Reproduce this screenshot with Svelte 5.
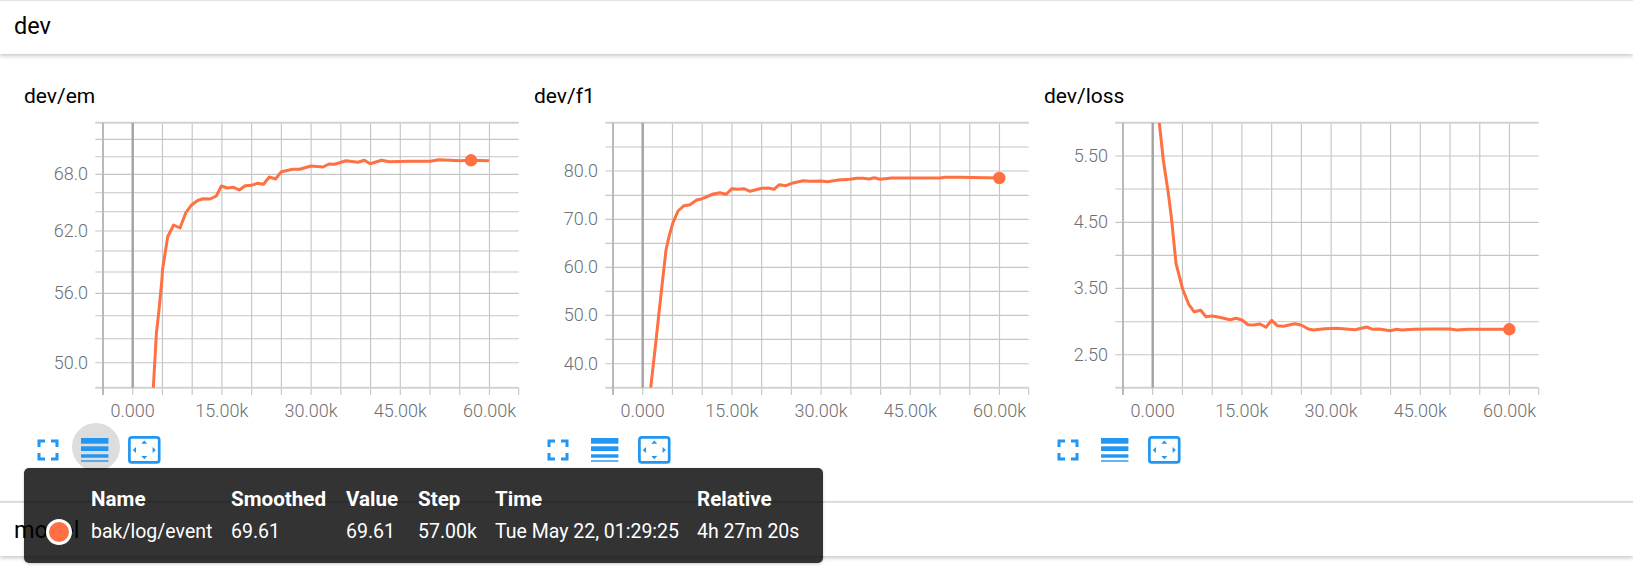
<script>
  // crop coords from the chart measurements -> local svg coords
  const crop = (list) => list.map(([x, y]) => [x / 3 + 10, y / 3 + 80 - SVG_TOP])

  const SVG_TOP = 115
  const PLOT_LEFT = 95.3
  const PLOT_RIGHT = 518.7
  const PLOT_TOP = 7.7
  const PLOT_BOTTOM = 272.7
  const ZERO_X = 132.7
  const STEP_X = 29.73

  const vlines = Array.from({ length: 14 }, (_, i) => 103 + STEP_X * i)
  const xlabels = ['0.000', '15.00k', '30.00k', '45.00k', '60.00k']

  const charts = [
    {
      title: 'dev/em',
      ylines: [139.3, 156.7, 174.3, 192.7, 211.7, 231, 251, 272, 293.3, 315.7, 338.7, 362.7],
      ylabels: [['68.0', 174.3], ['62.0', 231], ['56.0', 293.3], ['50.0', 362.7]],
      marker: [471, 45.3],
      points: [[153.3, 388], [156.4, 333.3], [159, 310], [161.9, 280], [162.5, 270], [167.7, 236.7], [173.6, 225], [180, 228], [186, 212.3], [191.8, 204.7], [198, 200.3], [203.2, 198.7], [210, 199], [216.3, 196], [221.4, 186], [227.3, 188], [233.5, 187.3], [239.4, 190], [245.2, 185.7], [251.4, 185.3], [257.3, 183.3], [263.5, 184.3], [269.3, 177], [275.5, 179], [281.4, 171.7], [292.7, 169.3], [299.6, 169.3], [311, 166], [323, 167], [328.9, 164], [334.7, 164.3], [346, 160.7], [358, 162.3], [364.4, 160.3], [370.2, 163.7], [381.6, 160.3], [389.2, 161.7], [409.8, 161.3], [430.5, 161.3], [439, 159.7], [459.8, 160.7], [471, 160.3], [489, 160.7]].map(([x, y]) => [x, y - SVG_TOP])
    },
    {
      title: 'dev/f1',
      ylines: [147, 171, 195.3, 219.3, 243.3, 267.3, 291.3, 315.3, 339.3, 363.7],
      ylabels: [['80.0', 171], ['70.0', 219.3], ['60.0', 267.3], ['50.0', 315.3], ['40.0', 363.7]],
      marker: [489.3, 63],
      points: crop([[392, 923], [407, 790], [418, 690], [429, 590], [438, 510], [447, 470], [458, 430], [474, 393], [492, 377], [510, 374], [530, 360], [547, 356], [580, 342], [600, 338], [618, 343], [636, 326], [654, 328], [672, 326], [690, 334], [725, 325], [745, 324], [762, 328], [778, 314], [798, 317], [815, 310], [850, 302], [870, 304], [903, 303], [922, 305], [955, 300], [990, 298], [1010, 295], [1030, 295], [1047, 297], [1063, 293], [1081, 298], [1115, 294], [1170, 294], [1260, 294], [1275, 292], [1320, 292], [1438, 294]])
    },
    {
      title: 'dev/loss',
      ylines: [156, 189, 222.3, 255.3, 288.3, 321.7, 354.7],
      ylabels: [['5.50', 156], ['4.50', 222.3], ['3.50', 288.3], ['2.50', 354.7]],
      marker: [489.3, 214.3],
      points: crop([[388, 128], [400, 240], [415, 340], [424, 410], [438, 550], [458, 628], [476, 673], [492, 695], [512, 691], [528, 710], [546, 708], [565, 711], [600, 719], [618, 715], [636, 720], [654, 734], [672, 735], [690, 732], [708, 742], [725, 721], [742, 737], [760, 739], [795, 731], [815, 736], [835, 747], [850, 750], [885, 746], [920, 745], [975, 749], [1010, 741], [1028, 748], [1047, 747], [1081, 752], [1100, 748], [1115, 750], [1150, 748], [1205, 747], [1260, 747], [1280, 750], [1315, 748], [1438, 748]])
    }
  ]

  const toPath = (pts) => pts.map(([x, y], i) => (i ? 'L' : 'M') + x.toFixed(1) + ' ' + y.toFixed(1)).join(' ')
</script>

<div class="page">
  <section class="pane">dev</section>

  <div class="charts">
    {#each charts as chart, n}
      <div class="card">
        <div class="title">{chart.title}</div>
        <svg class="plot" width="510" height="308" viewBox="0 0 510 308">
          <defs>
            <clipPath id="clip{n}">
              <rect x={PLOT_LEFT} y={PLOT_TOP} width={PLOT_RIGHT - PLOT_LEFT} height={PLOT_BOTTOM - PLOT_TOP} />
            </clipPath>
          </defs>

          {#each chart.ylines as y}
            <line class="grid" x1={PLOT_LEFT} x2={PLOT_RIGHT} y1={y - SVG_TOP} y2={y - SVG_TOP} />
          {/each}
          {#each vlines as x}
            <line class="grid" x1={x} x2={x} y1={PLOT_TOP} y2={PLOT_BOTTOM + 7.3} />
          {/each}
          <line class="grid" x1={PLOT_RIGHT} x2={PLOT_RIGHT} y1={PLOT_BOTTOM} y2={PLOT_BOTTOM + 7.3} />

          <line class="edge" x1={PLOT_LEFT} x2={PLOT_RIGHT} y1={PLOT_TOP} y2={PLOT_TOP} />
          <line class="edge" x1={PLOT_LEFT} x2={PLOT_RIGHT} y1={PLOT_BOTTOM} y2={PLOT_BOTTOM} />
          <line class="left" x1="103" x2="103" y1={PLOT_TOP} y2={PLOT_BOTTOM + 7.3} />
          <line class="zero" x1={ZERO_X} x2={ZERO_X} y1={PLOT_TOP} y2={PLOT_BOTTOM} />

          {#each chart.ylabels as [label, y]}
            <text class="tick" x="88" y={y - SVG_TOP + 5.8} text-anchor="end">{label}</text>
          {/each}
          {#each xlabels as label, i}
            <text class="tick" x={ZERO_X + STEP_X * 3 * i} y="301.5" text-anchor="middle">{label}</text>
          {/each}

          <path class="series" d={toPath(chart.points)} clip-path="url(#clip{n})" />
          <circle class="dot" cx={chart.marker[0]} cy={chart.marker[1]} r="6.2" />
        </svg>

        <div class="tools">
          <button class="tool" aria-label="fullscreen">
            <svg width="36" height="36" viewBox="0 0 24 24"><path d="M7 14H5v5h5v-2H7v-3zm-2-4h2V7h3V5H5v5zm12 7h-3v2h5v-5h-2v3zM14 5v2h3v3h2V5h-5z" /></svg>
          </button>
          <button class="tool" class:active={n === 0} aria-label="log scale">
            <svg class="bars" width="28" height="24" viewBox="0 0 28 24">
              <rect x="0" y="0" width="27.4" height="5.7" />
              <rect x="0" y="8.3" width="27.4" height="4.7" />
              <rect x="0" y="16.3" width="27.4" height="3.4" />
              <rect x="0" y="22.3" width="27.4" height="1.4" />
            </svg>
          </button>
          <button class="tool" aria-label="fit domain">
            <svg width="33" height="28" viewBox="0 0 33 28">
              <rect class="frame" x="1.4" y="1.4" width="29.8" height="25" rx="2.5" />
              <path d="M16.3 4.6l3 3.2h-6zM16.3 23.2l3-3.2h-6zM4.8 14l3.2-3v6zM27.8 14l-3.2-3v6z" />
            </svg>
          </button>
        </div>
      </div>
    {/each}
  </div>

  <section class="pane model">model</section>

  <div class="tooltip">
    <span class="swatch"></span>
    <table>
      <colgroup>
        <col class="c-name" /><col class="c-smoothed" /><col class="c-value" /><col class="c-step" /><col class="c-time" /><col class="c-rel" />
      </colgroup>
      <thead>
        <tr><th>Name</th><th>Smoothed</th><th>Value</th><th>Step</th><th>Time</th><th>Relative</th></tr>
      </thead>
      <tbody>
        <tr><td>bak/log/event</td><td>69.61</td><td>69.61</td><td>57.00k</td><td>Tue May 22, 01:29:25</td><td>4h 27m 20s</td></tr>
      </tbody>
    </table>
  </div>
</div>

<style>
  :global(body) {
    margin: 0;
    background: #fff;
  }

  .page {
    position: relative;
    width: 1633px;
    height: 572px;
    overflow: hidden;
    font-family: Roboto, "Liberation Sans", sans-serif;
    color: #000;
  }

  .pane {
    box-sizing: border-box;
    height: 54px;
    padding: 0 14px;
    border-top: 1px solid #e4e4e4;
    background: #fff;
    font-size: 23.5px;
    line-height: 50px;
    box-shadow: 0 2px 4px rgba(0, 0, 0, 0.22);
  }

  .model {
    border-top: 2px solid #ddd;
    margin-top: 30px;
    height: 55px;
    line-height: 54px;
  }

  .charts {
    display: flex;
  }

  .card {
    width: 510px;
    padding-top: 30px;
  }

  .title {
    padding-left: 24px;
    height: 24px;
    margin-bottom: 7px;
    font-size: 21px;
    line-height: 24px;
  }

  .plot {
    display: block;
    overflow: visible;
  }

  .grid {
    stroke: #c6c6c6;
    stroke-width: 1.15;
  }

  .edge {
    stroke: #d2d2d2;
    stroke-width: 2;
  }

  .left {
    stroke: #b9b9b9;
    stroke-width: 2;
  }

  .zero {
    stroke: #a3a3a3;
    stroke-width: 2.4;
  }

  .tick {
    font-size: 18px;
    font-weight: 300;
    fill: #6d7075;
  }

  .series {
    fill: none;
    stroke: #ff7043;
    stroke-width: 3;
    stroke-linejoin: round;
  }

  .dot {
    fill: #ff7043;
  }

  .tools {
    display: flex;
    padding-left: 24px;
  }

  .tool {
    display: flex;
    align-items: center;
    justify-content: center;
    width: 48px;
    height: 48px;
    padding: 6px 0 0;
    border: 0;
    border-radius: 50%;
    background: none;
    fill: #2196f3;
  }

  .tool.active {
    background: #ddd;
  }

  .bars {
    margin-right: 2px;
  }

  .frame {
    fill: none;
    stroke: #2196f3;
    stroke-width: 2.7;
  }

  .tooltip {
    position: absolute;
    left: 24px;
    top: 468px;
    box-sizing: border-box;
    width: 799px;
    height: 95px;
    border-radius: 5px;
    background: rgba(0, 0, 0, 0.8);
    box-shadow: 0 1px 3px rgba(0, 0, 0, 0.2);
    color: #fff;
  }

  .swatch {
    position: absolute;
    left: 22px;
    top: 51px;
    box-sizing: border-box;
    width: 26px;
    height: 26px;
    border: 3px solid #fff;
    border-radius: 50%;
    background: #ff7043;
  }

  table {
    position: absolute;
    left: 67px;
    top: 14px;
    width: 720px;
    table-layout: fixed;
    border-collapse: collapse;
  }

  .c-name { width: 140px; }
  .c-smoothed { width: 115px; }
  .c-value { width: 72px; }
  .c-step { width: 77px; }
  .c-time { width: 202px; }
  .c-rel { width: 114px; }

  th,
  td {
    padding: 0;
    height: 33px;
    text-align: left;
    white-space: nowrap;
    font-size: 19.5px;
    font-weight: 400;
  }

  th {
    font-size: 20.6px;
    font-weight: 700;
  }
</style>
